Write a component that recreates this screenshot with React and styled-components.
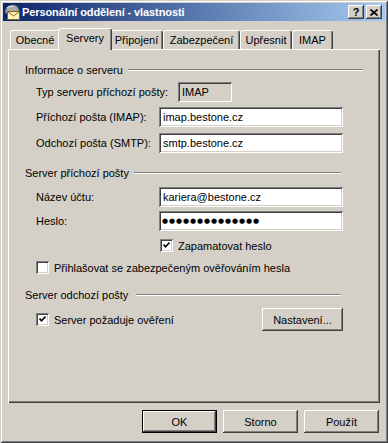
import React from 'react';
import styled, { createGlobalStyle } from 'styled-components';

const GlobalStyle = createGlobalStyle`
  html, body {
    margin: 0;
    padding: 0;
    background: #d4d0c8;
  }
  body {
    font-family: "Liberation Sans", Arial, sans-serif;
    font-size: 11px;
    color: #000;
  }
`;

const raised = `
  box-shadow: inset -1px -1px #404040, inset 1px 1px #ffffff,
    inset -2px -2px #808080, inset 2px 2px #d4d0c8;
`;

const sunken = `
  box-shadow: inset 1px 1px #808080, inset -1px -1px #ffffff,
    inset 2px 2px #404040, inset -2px -2px #d4d0c8;
`;

const Window = styled.div`
  width: 388px;
  height: 443px;
  box-sizing: border-box;
  padding: 3px;
  background: #d4d0c8;
  box-shadow: inset 1px 1px #d4d0c8, inset -1px -1px #404040,
    inset 2px 2px #ffffff, inset -2px -2px #808080;
  display: flex;
  flex-direction: column;
`;

const TitleBar = styled.div`
  height: 18px;
  display: flex;
  align-items: center;
  padding: 0 3px 0 1px;
  background: linear-gradient(to right, #0a246a, #a6caf0);
  color: #fff;
  font-weight: bold;
  font-size: 11px;
`;

const TitleText = styled.span`
  flex: 1;
  margin-left: 2px;
  letter-spacing: -0.1px;
  white-space: nowrap;
`;

const TitleButton = styled.div`
  width: 16px;
  height: 14px;
  margin-left: ${p => p.$gap || 0}px;
  background: #d4d0c8;
  ${raised}
  display: flex;
  align-items: center;
  justify-content: center;
  color: #000;
  font-weight: bold;
  font-size: 11px;
  line-height: 1;
`;

const Body = styled.div`
  padding: 0 5px;
  display: flex;
  flex-direction: column;
`;

const TabRow = styled.div`
  margin-top: 7px;
  height: 21px;
  padding-left: 2px;
  display: flex;
  align-items: flex-end;
  position: relative;
  z-index: 1;
`;

const Tab = styled.div`
  box-sizing: border-box;
  width: ${p => p.$w + (p.$active ? 4 : 0)}px;
  height: ${p => (p.$active ? 22 : 19)}px;
  margin: 0 ${p => (p.$active ? -2 : 0)}px ${p => (p.$active ? -1 : 0)}px;
  position: relative;
  z-index: ${p => (p.$active ? 2 : 1)};
  background: #d4d0c8;
  border-top: 1px solid #fff;
  border-left: 1px solid #fff;
  border-right: 1px solid #404040;
  border-radius: 3px 3px 0 0;
  box-shadow: inset -1px 0 #808080;
  display: flex;
  align-items: center;
  justify-content: center;
  padding-bottom: ${p => (p.$active ? 3 : 0)}px;
  white-space: nowrap;
`;

const Panel = styled.div`
  height: 354px;
  box-sizing: border-box;
  padding: 0 37px 0 17px;
  background: #d4d0c8;
  box-shadow: inset 1px 1px #ffffff, inset -1px -1px #404040, inset -2px -2px #808080;
  display: flex;
  flex-direction: column;
`;

const GroupHeader = styled.div`
  height: 13px;
  margin-top: ${p => p.$gap}px;
  margin-right: ${p => p.$lineEnd}px;
  display: flex;
  align-items: center;
  white-space: nowrap;
`;

const GroupLine = styled.div`
  flex: 1;
  height: 2px;
  margin-left: ${p => p.$gap || 5}px;
  box-shadow: inset 0 1px #808080, inset 0 -1px #ffffff;
`;

const FieldRow = styled.div`
  height: 20px;
  margin-top: ${p => p.$gap}px;
  padding-left: 11px;
  display: grid;
  grid-template-columns: 123px 1fr;
  align-items: center;
`;

const Label = styled.span`
  white-space: nowrap;
`;

const Field = styled.div`
  height: 20px;
  box-sizing: border-box;
  width: ${p => (p.$w ? `${p.$w}px` : 'auto')};
  margin-left: ${p => p.$offset || 0}px;
  padding: 0 4px;
  background: ${p => (p.$disabled ? '#d4d0c8' : '#ffffff')};
  ${sunken}
  display: flex;
  align-items: center;
  white-space: nowrap;
  overflow: hidden;
`;

const Dots = styled.span`
  font-family: "DejaVu Sans", sans-serif;
  font-size: 7px;
  letter-spacing: 0.9px;
  margin-left: -1px;
`;

const CheckRow = styled.label`
  display: flex;
  align-items: center;
  height: ${p => p.$h || 13}px;
  margin-top: ${p => p.$gap}px;
  margin-left: ${p => p.$indent}px;
  white-space: nowrap;
`;

const Box = styled.span`
  width: 13px;
  height: 13px;
  flex: none;
  background: #fff;
  ${sunken}
  display: flex;
  align-items: center;
  justify-content: center;
  margin-right: 5px;
`;

const Spacer = styled.div`
  flex: 1;
`;

const Button = styled.div`
  width: ${p => p.$w || 75}px;
  height: 23px;
  box-sizing: border-box;
  background: #d4d0c8;
  ${raised}
  ${p => p.$default && `
    border: 1px solid #000;
    box-shadow: inset -1px -1px #404040, inset 1px 1px #ffffff,
      inset -2px -2px #808080, inset 2px 2px #d4d0c8;
  `}
  display: flex;
  align-items: center;
  justify-content: center;
  white-space: nowrap;
`;

const ButtonRow = styled.div`
  margin-top: 7px;
  margin-right: 1px;
  display: flex;
  justify-content: flex-end;
  gap: 6px;
`;

const MailIcon = () => (
  <svg width="16" height="16" viewBox="0 0 16 16">
    <path d="M1 9 C1 4 5 1 9 1 C13 1 15 4 15 7 L15 9 Z" fill="#a8a8a8" stroke="#606060" strokeWidth="1" />
    <path d="M3 4 C5 2 8 2 10 2" stroke="#e8e8e8" strokeWidth="1.2" fill="none" />
    <rect x="3.5" y="7.5" width="12" height="8" fill="#fff4b8" stroke="#7a6420" />
    <path d="M3.5 7.5 L9.5 12 L15.5 7.5" stroke="#7a6420" fill="none" />
  </svg>
);

const CloseGlyph = () => (
  <svg width="8" height="7" viewBox="0 0 8 7">
    <path d="M0.5 0.5 L7.5 6.5 M7.5 0.5 L0.5 6.5" stroke="#000" strokeWidth="1.6" />
  </svg>
);

const Check = () => (
  <svg width="7" height="7" viewBox="0 0 7 7">
    <path d="M0.5 2.5 L2.5 4.8 L6.5 0.6" stroke="#000" strokeWidth="1.7" fill="none" />
  </svg>
);

const tabs = [
  { name: 'Obecné', w: 50 },
  { name: 'Servery', w: 50, active: true },
  { name: 'Připojení', w: 53 },
  { name: 'Zabezpečení', w: 77 },
  { name: 'Upřesnit', w: 52 },
  { name: 'IMAP', w: 41 },
];

const App = () => {
  return (
    <Window>
      <GlobalStyle />
      <TitleBar>
        <MailIcon />
        <TitleText>Personální oddělení - vlastnosti</TitleText>
        <TitleButton>?</TitleButton>
        <TitleButton $gap={2}>
          <CloseGlyph />
        </TitleButton>
      </TitleBar>

      <Body>
        <TabRow>
          {tabs.map(t => (
            <Tab key={t.name} $w={t.w} $active={t.active}>
              {t.name}
            </Tab>
          ))}
        </TabRow>

        <Panel>
          <GroupHeader $gap={14} $lineEnd={-20}>
            Informace o serveru
            <GroupLine />
          </GroupHeader>
          <FieldRow $gap={6}>
            <Label>Typ serveru příchozí pošty:</Label>
            <Field $disabled $offset={19} $w={54}>IMAP</Field>
          </FieldRow>
          <FieldRow $gap={5}>
            <Label>Příchozí pošta (IMAP):</Label>
            <Field>imap.bestone.cz</Field>
          </FieldRow>
          <FieldRow $gap={6}>
            <Label>Odchozí pošta (SMTP):</Label>
            <Field>smtp.bestone.cz</Field>
          </FieldRow>

          <GroupHeader $gap={13} $lineEnd={2}>
            Server příchozí pošty
            <GroupLine />
          </GroupHeader>
          <FieldRow $gap={8}>
            <Label>Název účtu:</Label>
            <Field>kariera@bestone.cz</Field>
          </FieldRow>
          <FieldRow $gap={4}>
            <Label>Heslo:</Label>
            <Field>
              <Dots>●●●●●●●●●●●●●●</Dots>
            </Field>
          </FieldRow>
          <CheckRow $gap={8} $indent={135}>
            <Box><Check /></Box>
            Zapamatovat heslo
          </CheckRow>
          <CheckRow $gap={9} $indent={11}>
            <Box />
            Přihlašovat se zabezpečeným ověřováním hesla
          </CheckRow>

          <GroupHeader $gap={14} $lineEnd={2}>
            Server odchozí pošty
            <GroupLine $gap={8} />
          </GroupHeader>
          <CheckRow $gap={7} $indent={11} $h={23}>
            <Box><Check /></Box>
            Server požaduje ověření
            <Spacer />
            <Button $w={81}>Nastavení...</Button>
          </CheckRow>
        </Panel>

        <ButtonRow>
          <Button $default>OK</Button>
          <Button>Storno</Button>
          <Button>Použít</Button>
        </ButtonRow>
      </Body>
    </Window>
  );
};

export default App;
